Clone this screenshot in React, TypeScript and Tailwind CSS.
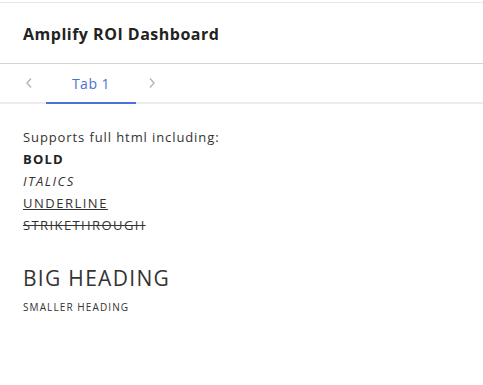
import React from "react";

export default function App() {
  const font = { fontFamily: '"Open Sans", "Noto Sans", sans-serif' };
  return (
    <div className="w-[483px] h-[385px] bg-white text-[#222]" style={font}>
      <div className="h-[2px]" />
      <div className="border-t border-[#e8e8e8]" />
      <div className="h-[61px] border-b border-[#d4d4d4] flex items-center px-[23px]">
        <h1 className="text-[16px] font-bold text-[#222] tracking-[0.5px] mt-[1px]">Amplify ROI Dashboard</h1>
      </div>
      <div className="flex items-stretch h-[40px] border-b-2 border-[#ececec]">
        <div className="w-[46px] flex items-center justify-center text-[#b5b5b5] pl-[12px]">
          <svg width="8" height="12" viewBox="0 0 8 12" fill="none" stroke="currentColor" strokeWidth="1.4"><path d="M6 1.5 L2 6 L6 10.5" /></svg>
        </div>
        <div className="w-[90px] flex items-center justify-center text-[14px] tracking-[0.5px] text-[#4a72d4] border-b-2 border-[#4a72d4] -mb-[2px]">Tab 1</div>
        <div className="w-[32px] flex items-center justify-center text-[#b5b5b5]">
          <svg width="8" height="12" viewBox="0 0 8 12" fill="none" stroke="currentColor" strokeWidth="1.4"><path d="M2 1.5 L6 6 L2 10.5" /></svg>
        </div>
      </div>
      <div className="px-[23px] pt-[22px] text-[13px] text-[#333] tracking-[0.9px]">
        <div className="leading-[22px]">Supports full html including:</div>
        <div className="leading-[22px] font-bold text-[#222] tracking-[1.2px]">BOLD</div>
        <div className="leading-[22px] italic tracking-[1.5px]">ITALICS</div>
        <div className="leading-[22px] underline tracking-[1.5px]">UNDERLINE</div>
        <div className="leading-[22px] line-through tracking-[1.4px]">STRIKETHROUGH</div>
        <div className="text-[21px] leading-[26px] mt-[29px] text-[#333] tracking-[1.3px]">BIG HEADING</div>
        <div className="text-[10px] leading-[14px] mt-[9px] text-[#333] tracking-[1.1px]">SMALLER HEADING</div>
      </div>
    </div>
  );
}
